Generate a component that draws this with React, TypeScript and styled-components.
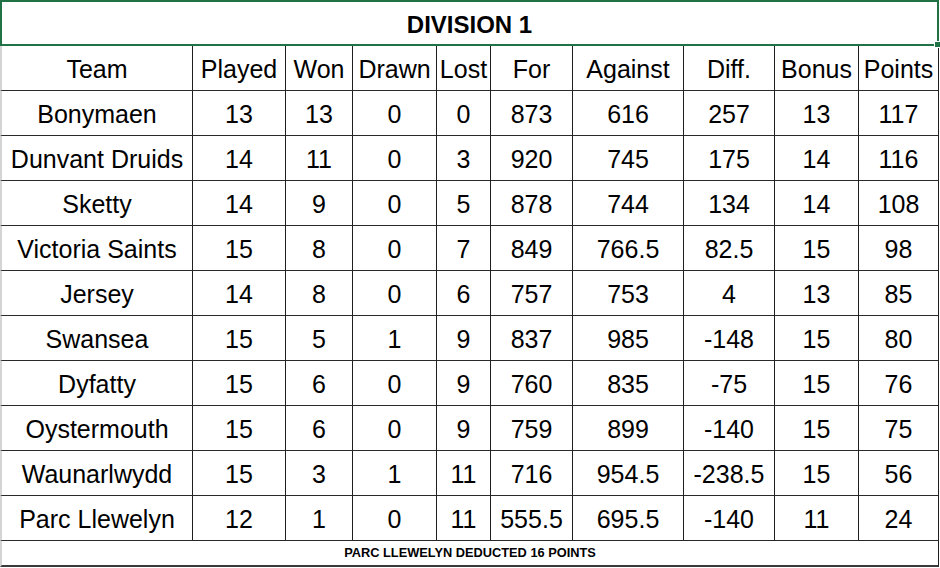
import React from "react";
import styled, { createGlobalStyle } from "styled-components";

const GlobalStyle = createGlobalStyle`
  html, body {
    margin: 0;
    padding: 0;
    background: #ffffff;
  }
  body {
    font-family: "Liberation Sans", Arial, sans-serif;
    color: #000000;
  }
`;

const COLUMNS = "193px 93px 67px 84px 54px 82px 111px 91px 84px 80px";

const Sheet = styled.div`
  width: 939px;
`;

const Title = styled.div`
  box-sizing: border-box;
  height: 46px;
  border: 2px solid #217346;
  display: flex;
  align-items: center;
  justify-content: center;
  font-weight: bold;
  font-size: 24px;
  padding-top: 4px;
  position: relative;
`;

const Handle = styled.span`
  position: absolute;
  right: -4px;
  bottom: -4px;
  width: 5px;
  height: 5px;
  background: #217346;
  border: 1px solid #ffffff;
`;

const Grid = styled.div`
  display: grid;
  grid-template-columns: ${COLUMNS};
`;

const Cell = styled.div<{ $first?: boolean }>`
  box-sizing: border-box;
  height: 45px;
  display: flex;
  align-items: center;
  justify-content: center;
  font-size: 25px;
  white-space: nowrap;
  border-right: 1px solid #1f1f1f;
  border-bottom: 1px solid #2a2a2a;
  border-left: ${(p) => (p.$first ? "2px solid #d4d4d4" : "none")};
  padding-top: 3px;
`;

const Footer = styled.div`
  box-sizing: border-box;
  grid-column: 1 / -1;
  height: 26px;
  display: flex;
  align-items: center;
  justify-content: center;
  font-size: 12.8px;
  font-weight: bold;
  border-left: 2px solid #d4d4d4;
  border-right: 1px solid #1f1f1f;
  border-bottom: 2px solid #3a3a3a;
  padding-bottom: 2px;
`;

const headers = [
  "Team",
  "Played",
  "Won",
  "Drawn",
  "Lost",
  "For",
  "Against",
  "Diff.",
  "Bonus",
  "Points",
];

const rows: string[][] = [
  ["Bonymaen", "13", "13", "0", "0", "873", "616", "257", "13", "117"],
  ["Dunvant Druids", "14", "11", "0", "3", "920", "745", "175", "14", "116"],
  ["Sketty", "14", "9", "0", "5", "878", "744", "134", "14", "108"],
  ["Victoria Saints", "15", "8", "0", "7", "849", "766.5", "82.5", "15", "98"],
  ["Jersey", "14", "8", "0", "6", "757", "753", "4", "13", "85"],
  ["Swansea", "15", "5", "1", "9", "837", "985", "-148", "15", "80"],
  ["Dyfatty", "15", "6", "0", "9", "760", "835", "-75", "15", "76"],
  ["Oystermouth", "15", "6", "0", "9", "759", "899", "-140", "15", "75"],
  ["Waunarlwydd", "15", "3", "1", "11", "716", "954.5", "-238.5", "15", "56"],
  ["Parc Llewelyn", "12", "1", "0", "11", "555.5", "695.5", "-140", "11", "24"],
];

export default function App() {
  return (
    <>
      <GlobalStyle />
      <Sheet>
        <Title>
          DIVISION 1
          <Handle />
        </Title>
        <Grid>
          {headers.map((h, i) => (
            <Cell key={h} $first={i === 0}>
              {h}
            </Cell>
          ))}
          {rows.map((row) =>
            row.map((value, i) => (
              <Cell key={row[0] + i} $first={i === 0}>
                {value}
              </Cell>
            ))
          )}
          <Footer>PARC LLEWELYN DEDUCTED 16 POINTS</Footer>
        </Grid>
      </Sheet>
    </>
  );
}
